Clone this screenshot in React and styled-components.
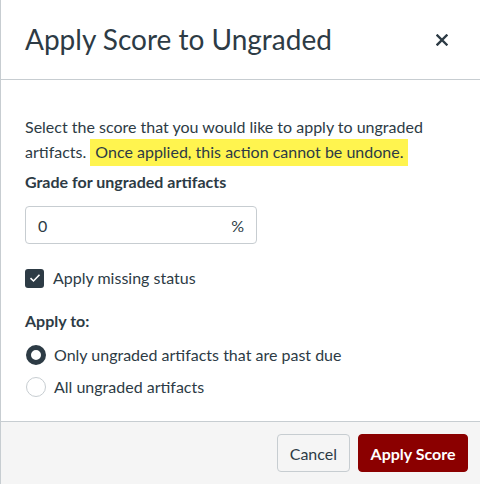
import React from "react";
import styled, { createGlobalStyle } from "styled-components";

const GlobalStyle = createGlobalStyle`
  html, body {
    margin: 0;
    padding: 0;
    background: #ffffff;
  }
  body {
    font-family: Lato, "Noto Sans", sans-serif;
    color: #2d3b45;
  }
`;

const Dialog = styled.div`
  width: 480px;
  height: 484px;
  box-sizing: border-box;
  border-left: 1px solid #c7cdd1;
  display: flex;
  flex-direction: column;
  background: #ffffff;
`;

const Header = styled.div`
  height: 79px;
  border-bottom: 1px solid #c7cdd1;
  display: flex;
  align-items: center;
  justify-content: space-between;
  padding: 0 32px 0 24px;
`;

const Title = styled.h2`
  margin: 0;
  font-size: 28px;
  font-weight: 400;
  line-height: 1.2;
  color: #2d3b45;
`;

const CloseButton = styled.button`
  border: none;
  background: none;
  padding: 0;
  width: 12px;
  height: 12px;
  display: flex;
  cursor: pointer;
`;

const Body = styled.div`
  flex: 1;
  padding: 34px 24px 0 24px;
  display: flex;
  flex-direction: column;
`;

const Text = styled.p`
  margin: 0;
  font-size: 16px;
  line-height: 25px;
`;

const Highlight = styled.mark`
  background: #fff44f;
  color: inherit;
  padding: 3px 5px 5px 5px;
`;

const Label = styled.div`
  font-size: 16px;
  font-weight: 700;
  line-height: 24px;
  margin-top: ${(p) => p.$top}px;
`;

const InputBox = styled.div`
  margin-top: 12px;
  width: 232px;
  height: 38px;
  box-sizing: border-box;
  border: 1px solid #c7cdd1;
  border-radius: 4px;
  display: flex;
  align-items: center;
  justify-content: space-between;
  padding: 0 12px;
  font-size: 16px;
`;

const Row = styled.label`
  display: flex;
  align-items: center;
  gap: ${(p) => p.$gap}px;
  font-size: 16px;
  line-height: 24px;
  margin-top: ${(p) => p.$top}px;
`;

const Check = styled.span`
  width: 19px;
  height: 19px;
  border-radius: 3px;
  background: #2d3b45;
  display: flex;
  align-items: center;
  justify-content: center;
`;

const Radio = styled.span`
  width: 20px;
  height: 20px;
  box-sizing: border-box;
  border-radius: 50%;
  margin-left: 1px;
  border: ${(p) => (p.$on ? "5px solid #2d3b45" : "1px solid #c7cdd1")};
  background: #ffffff;
`;

const Footer = styled.div`
  height: 62px;
  border-top: 1px solid #c7cdd1;
  background: #f5f5f5;
  display: flex;
  align-items: center;
  justify-content: flex-end;
  gap: 8px;
  padding: 0 12px;
`;

const Button = styled.button`
  height: 38px;
  box-sizing: border-box;
  padding: 0 ${(p) => (p.$primary ? 11.5 : 12)}px;
  border-radius: 4px;
  border: 1px solid ${(p) => (p.$primary ? "#8b0000" : "#c7cdd1")};
  background: ${(p) => (p.$primary ? "#8b0000" : "#f5f5f5")};
  color: ${(p) => (p.$primary ? "#ffffff" : "#2d3b45")};
  font-family: Lato, "Noto Sans", sans-serif;
  font-size: 16px;
  font-weight: ${(p) => (p.$primary ? 700 : 400)};
  cursor: pointer;
`;

export default function App() {
  return (
    <>
      <GlobalStyle />
      <Dialog>
        <Header>
          <Title>Apply Score to Ungraded</Title>
          <CloseButton aria-label="Close">
            <svg width="12" height="12" viewBox="0 0 12 12">
              <path d="M1.5 1.5 L10.5 10.5 M10.5 1.5 L1.5 10.5" stroke="#2d3b45" strokeWidth="2.4" strokeLinecap="square" />
            </svg>
          </CloseButton>
        </Header>
        <Body>
          <Text>
            Select the score that you would like to apply to ungraded artifacts.{" "}
            <Highlight>Once applied, this action cannot be undone.</Highlight>
          </Text>
          <Label $top={6}>Grade for ungraded artifacts</Label>
          <InputBox>
            <span>0</span>
            <span>%</span>
          </InputBox>
          <Row $gap={9} $top={22}>
            <Check>
              <svg width="12" height="10" viewBox="0 0 12 10">
                <path d="M1.5 5.2 L4.5 8 L10.5 1.8" fill="none" stroke="#ffffff" strokeWidth="1.6" />
              </svg>
            </Check>
            Apply missing status
          </Row>
          <Label $top={19}>Apply to:</Label>
          <Row $gap={8} $top={10}>
            <Radio $on />
            Only ungraded artifacts that are past due
          </Row>
          <Row $gap={8} $top={8}>
            <Radio />
            All ungraded artifacts
          </Row>
        </Body>
        <Footer>
          <Button>Cancel</Button>
          <Button $primary>Apply Score</Button>
        </Footer>
      </Dialog>
    </>
  );
}
